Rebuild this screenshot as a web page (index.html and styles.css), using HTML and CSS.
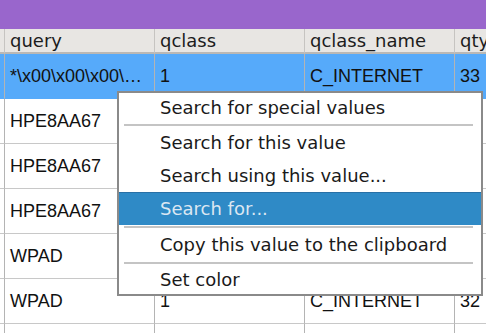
FILE: index.html
```html
<!DOCTYPE html>
<html lang="en">
<head>
  <meta charset="UTF-8">
  <title>Query results</title>
  <link rel="stylesheet" href="styles.css">
</head>
<body>
  <div class="titlebar"></div>
  <div class="grid">
    <div class="hcell gutter"></div>
    <div class="hcell">query</div>
    <div class="hcell">qclass</div>
    <div class="hcell">qclass_name</div>
    <div class="hcell">qty</div>

    <div class="cell gutter sel"></div>
    <div class="cell sel">*\x00\x00\x00\…</div>
    <div class="cell sel">1</div>
    <div class="cell sel">C_INTERNET</div>
    <div class="cell sel">33</div>

    <div class="cell gutter"></div>
    <div class="cell">HPE8AA67</div>
    <div class="cell">1</div>
    <div class="cell">C_INTERNET</div>
    <div class="cell">33</div>

    <div class="cell gutter"></div>
    <div class="cell">HPE8AA67</div>
    <div class="cell">1</div>
    <div class="cell">C_INTERNET</div>
    <div class="cell">33</div>

    <div class="cell gutter"></div>
    <div class="cell">HPE8AA67</div>
    <div class="cell">1</div>
    <div class="cell">C_INTERNET</div>
    <div class="cell">33</div>

    <div class="cell gutter"></div>
    <div class="cell">WPAD</div>
    <div class="cell">1</div>
    <div class="cell">C_INTERNET</div>
    <div class="cell">32</div>

    <div class="cell gutter"></div>
    <div class="cell">WPAD</div>
    <div class="cell">1</div>
    <div class="cell">C_INTERNET</div>
    <div class="cell">32</div>

    <div class="cell gutter"></div>
    <div class="cell"></div>
    <div class="cell"></div>
    <div class="cell"></div>
    <div class="cell"></div>
  </div>

  <div class="menu">
    <div class="item first">Search for special values</div>
    <div class="sep"></div>
    <div class="item">Search for this value</div>
    <div class="item">Search using this value...</div>
    <div class="item active">Search for...</div>
    <div class="sep"></div>
    <div class="item">Copy this value to the clipboard</div>
    <div class="sep"></div>
    <div class="item last">Set color</div>
  </div>
</body>
</html>
```

FILE: styles.css
```css
body { margin: 0; width: 486px; height: 333px; overflow: hidden; background: #fff; position: relative; }
.titlebar { height: 29px; background: #9966cc; }
.grid { display: grid; grid-template-columns: 5px 150px 150px 150px 150px; grid-template-rows: 25px repeat(7, 45px); }
.hcell { background: #e8e6e3; border-right: 1px solid #c6c4c1; border-bottom: 2px solid #bab8b5; font-family: "DejaVu Sans", sans-serif; font-size: 18px; color: #1c1c1c; padding-left: 5px; line-height: 23px; white-space: nowrap; overflow: hidden; }
.hcell.gutter { padding: 0; }
.cell { border-right: 1px solid #b4b4b4; border-bottom: 1px solid #c8c8c8; font-family: "Liberation Sans", Arial, sans-serif; font-size: 18px; color: #111; padding-left: 5px; display: flex; align-items: center; white-space: nowrap; overflow: hidden; }
.cell.gutter { padding: 0; }
.cell.sel { background: #56aafa; border-bottom-color: #56aafa; }
.menu { position: absolute; left: 117px; top: 91px; width: 362px; background: #fff; border: 2px solid #8a8a8a; font-family: "DejaVu Sans", sans-serif; font-size: 18px; color: #1a1a1a; }
.item { height: 33px; line-height: 33px; padding-left: 41px; white-space: nowrap; }
.item.first { height: 30px; line-height: 29px; }
.item.last { height: 30px; line-height: 31px; }
.item.active { background: #2f8ac6; border-top: 1px solid #2870a6; height: 32px; line-height: 31px; color: #dbe7f2; }
.sep { height: 2px; background: #c4c4c4; margin: 1px 8px 0 5px; }
```
